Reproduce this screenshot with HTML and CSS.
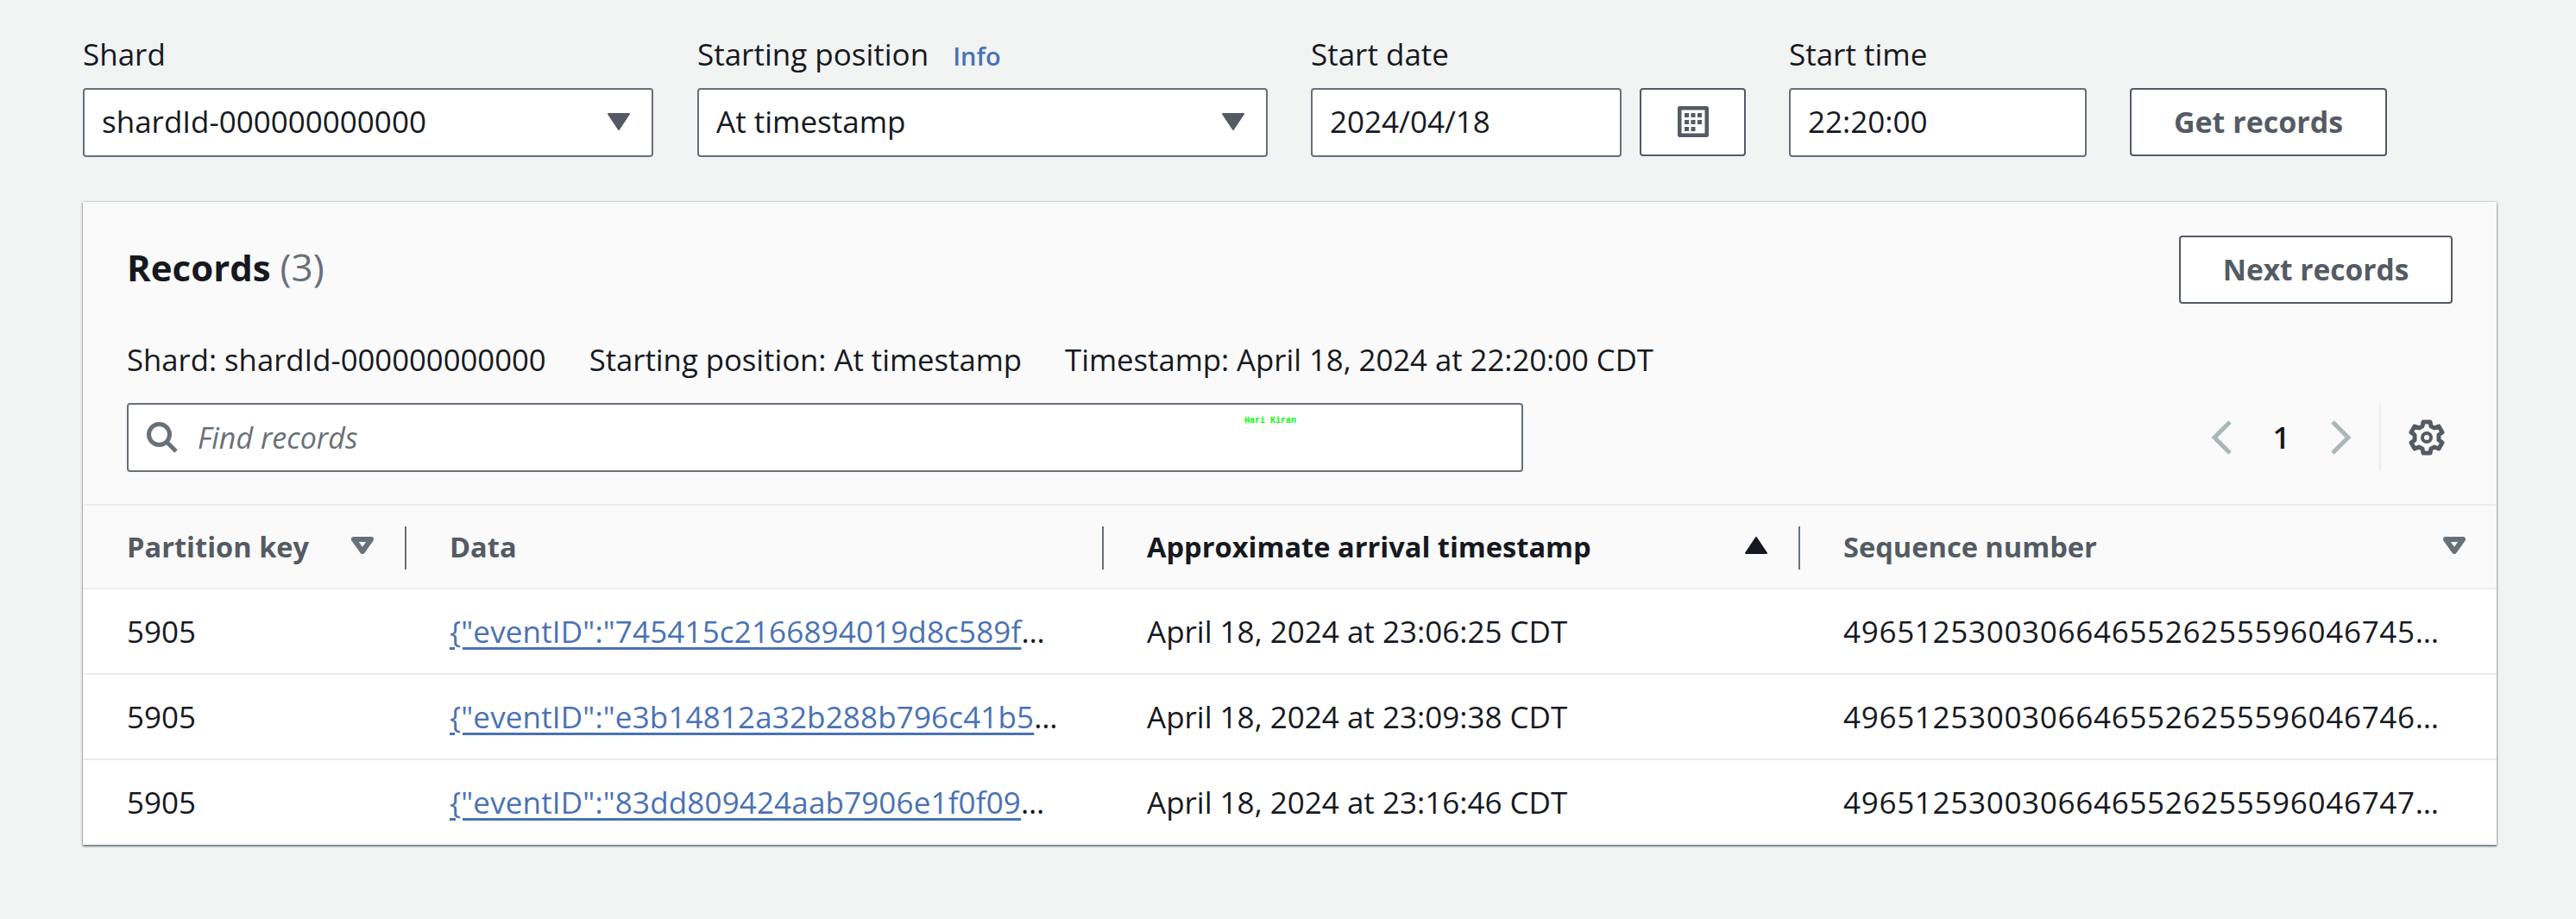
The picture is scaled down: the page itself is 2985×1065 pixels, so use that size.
FILE: index.html
```html
<!DOCTYPE html>
<html lang="en">
<head>
    <meta charset="UTF-8">
    <title>Records</title>
    <link rel="stylesheet" href="styles.css">
</head>
<body>

    <!-- Query form -->
    <div class="query">
        <div class="field field-select">
            <div class="field-label">Shard</div>
            <div class="control select">
                <span>shardId-000000000000</span>
                <svg class="caret" viewBox="0 0 26 20"><path d="M1 1h24L13 19z" fill="#545b64" stroke="#545b64" stroke-width="2" stroke-linejoin="round"/></svg>
            </div>
        </div>
        <div class="field field-select field-narrow">
            <div class="field-label">Starting position <a class="info">Info</a></div>
            <div class="control select">
                <span>At timestamp</span>
                <svg class="caret" viewBox="0 0 26 20"><path d="M1 1h24L13 19z" fill="#545b64" stroke="#545b64" stroke-width="2" stroke-linejoin="round"/></svg>
            </div>
        </div>
        <div class="field field-narrow">
            <div class="field-label">Start date</div>
            <div class="date-row">
                <div class="control date-input">2024/04/18</div>
                <button class="btn btn-cal">
                    <svg width="36" height="36" viewBox="0 0 36 36">
                        <rect x="2" y="2" width="32" height="32" rx="2" fill="none" stroke="#545b64" stroke-width="5"/>
                        <path fill="#545b64" d="M8 8h5v5H8zM15.500 8h5v5h-5zM23 8h5v5h-5zM8 16h5v5H8zM15.500 16h5v5h-5zM23 16h5v5h-5zM8 24h5v5H8zM15.500 24h5v5h-5z"/>
                    </svg>
                </button>
            </div>
        </div>
        <div class="field field-narrow">
            <div class="field-label">Start time</div>
            <div class="control time-input">22:20:00</div>
        </div>
        <button class="btn btn-get">Get records</button>
    </div>

    <!-- Records panel -->
    <div class="panel">
        <div class="panel-head">
            <div class="panel-top">
                <h2>Records <span class="count">(3)</span></h2>
                <button class="btn btn-next">Next records</button>
            </div>
            <div class="meta">
                <span>Shard: shardId-000000000000</span>
                <span>Starting position: At timestamp</span>
                <span>Timestamp: April 18, 2024 at 22:20:00 CDT</span>
            </div>
            <div class="tools">
                <div class="search">
                    <svg class="search-icon" width="38" height="38" viewBox="0 0 38 38"><circle cx="15.500" cy="15.500" r="12" fill="none" stroke="#687078" stroke-width="5"/><path d="M24 24l11 11" stroke="#687078" stroke-width="5"/></svg>
                    <span class="placeholder">Find records</span>
                    <span class="watermark">Hari Kiran</span>
                </div>
                <div class="pager">
                    <svg class="chev" width="26" height="40" viewBox="0 0 26 40"><path d="M22 2L4 20l18 18" fill="none" stroke="#aab7b8" stroke-width="5"/></svg>
                    <span class="page">1</span>
                    <svg class="chev" width="26" height="40" viewBox="0 0 26 40"><path d="M4 2l18 18L4 38" fill="none" stroke="#aab7b8" stroke-width="5"/></svg>
                </div>
                <div class="settings">
                    <svg width="42" height="42" viewBox="0 0 42 42">
                        <path d="M17 3h8l1 5 4 2 5-2 4 7-4 3v6l4 3-4 7-5-2-4 2-1 5h-8l-1-5-4-2-5 2-4-7 4-3v-6l-4-3 4-7 5 2 4-2z" fill="none" stroke="#545b64" stroke-width="5" stroke-linejoin="round"/>
                        <circle cx="21" cy="21" r="5" fill="none" stroke="#545b64" stroke-width="4"/>
                    </svg>
                </div>
            </div>
        </div>

        <div class="grid-row grid-head">
            <div class="th">Partition key
                <svg class="sort" viewBox="0 0 26 20"><path d="M3 3h20L13 17z" fill="none" stroke="#687078" stroke-width="6" stroke-linejoin="round"/></svg>
            </div>
            <div class="th">Data</div>
            <div class="th th-active">Approximate arrival timestamp
                <svg class="sort" viewBox="0 0 26 20"><path d="M1 19h24L13 1z" fill="#16191f" stroke="#16191f" stroke-width="2" stroke-linejoin="round"/></svg>
            </div>
            <div class="th">Sequence number
                <svg class="sort" viewBox="0 0 26 20"><path d="M3 3h20L13 17z" fill="none" stroke="#687078" stroke-width="6" stroke-linejoin="round"/></svg>
            </div>
        </div>

        <div class="grid-row">
            <div class="td">5905</div>
            <div class="td"><div class="clip"><a>{"eventID":"745415c2166894019d8c589f2c1a</a></div></div>
            <div class="td">April 18, 2024 at 23:06:25 CDT</div>
            <div class="td"><div class="clip seq">4965125300306646552625559604674531</div></div>
        </div>
        <div class="grid-row">
            <div class="td">5905</div>
            <div class="td"><div class="clip"><a>{"eventID":"e3b14812a32b288b796c41b5fd70</a></div></div>
            <div class="td">April 18, 2024 at 23:09:38 CDT</div>
            <div class="td"><div class="clip seq">4965125300306646552625559604674652</div></div>
        </div>
        <div class="grid-row">
            <div class="td">5905</div>
            <div class="td"><div class="clip"><a>{"eventID":"83dd809424aab7906e1f0f0982b6</a></div></div>
            <div class="td">April 18, 2024 at 23:16:46 CDT</div>
            <div class="td"><div class="clip seq">4965125300306646552625559604674773</div></div>
        </div>
    </div>

</body>
</html>
```

FILE: styles.css
```css
body {
    margin: 0;
    height: 1065px;
    padding: 0 92px 0 96px;
    box-sizing: border-box;
    overflow: hidden;
    background-color: #f2f3f3;
    color: #16191f;
    font-family: "Open Sans", "Noto Sans", sans-serif;
    font-size: 35px;
    line-height: 44px;
}

/* query form */
.query {
    display: flex;
    align-items: flex-end;
    padding-top: 41px;
    padding-bottom: 52px;
}
.field {
    margin-right: 51px;
}
.field-narrow {
    margin-right: 50px;
}
.field-select .control {
    width: 661px;
}
.field-label {
    height: 61px;
    white-space: nowrap;
}
.info {
    margin-left: 19px;
    color: #4a72b5;
    font-size: 29px;
    font-weight: 600;
}
.control {
    box-sizing: border-box;
    height: 80px;
    padding: 0 20px 2px;
    display: flex;
    align-items: center;
    justify-content: space-between;
    background-color: #fff;
    border: 2px solid #687078;
    border-radius: 4px;
}
.caret {
    width: 26px;
    height: 20px;
    margin-right: 5px;
}
.date-row {
    display: flex;
    gap: 21px;
}
.date-input {
    width: 360px;
}
.time-input {
    width: 345px;
}
.btn {
    box-sizing: border-box;
    height: 79px;
    padding: 0 0 2px;
    background-color: #fff;
    border: 2px solid #545b64;
    border-radius: 4px;
    color: #545b64;
    font-family: inherit;
    font-size: 34px;
    font-weight: 700;
}
.btn-cal {
    width: 123px;
    display: flex;
    align-items: center;
    justify-content: center;
}
.btn-get {
    width: 298px;
    margin-bottom: 1px;
}
.btn-next {
    width: 317px;
    font-size: 33.500px;
}

/* records panel */
.panel {
    background-color: #fff;
    box-shadow: 0 2px 2px rgba(0, 28, 36, 0.5), 1px 0 2px rgba(0, 28, 36, 0.2), -1px 0 2px rgba(0, 28, 36, 0.2);
}
.panel-head {
    box-sizing: border-box;
    height: 352px;
    padding: 39px 51px 0;
    background-color: #fafafa;
    border-bottom: 2px solid #eaeded;
}
.panel-top {
    display: flex;
    align-items: center;
    justify-content: space-between;
    height: 79px;
}
h2 {
    margin: -6px 0 0;
    font-size: 42px;
    font-weight: 700;
}
.count {
    color: #687078;
    font-size: 44px;
    font-weight: 400;
}
.meta {
    display: flex;
    gap: 50px;
    margin-top: 43px;
    height: 46px;
    font-size: 34.700px;
    white-space: nowrap;
}
.tools {
    display: flex;
    align-items: center;
    margin-top: 26px;
}
.search {
    position: relative;
    box-sizing: border-box;
    width: 1618px;
    height: 80px;
    padding-left: 20px;
    display: flex;
    align-items: center;
    background-color: #fff;
    border: 2px solid #687078;
    border-radius: 4px;
}
.placeholder {
    margin-left: 22px;
    color: #687078;
    font-style: italic;
    font-size: 34px;
}
.watermark {
    position: absolute;
    left: 1293px;
    top: 11px;
    color: #00ff00;
    font-family: "Liberation Mono", monospace;
    font-size: 10px;
    font-weight: 700;
    line-height: 16px;
}
.pager {
    display: flex;
    align-items: center;
    margin-left: auto;
}
.page {
    width: 111px;
    text-align: center;
    font-weight: 600;
}
.settings {
    box-sizing: border-box;
    height: 78px;
    margin: 0 9px 0 32px;
    padding-left: 32px;
    display: flex;
    align-items: center;
    border-left: 2px solid #eaeded;
}

/* table */
.grid-row {
    display: grid;
    grid-template-columns: 373px 808px 807px 809px;
    height: 99px;
    border-bottom: 2px solid #eaeded;
    box-sizing: border-box;
}
.grid-row:last-child {
    border-bottom: 0;
    height: 98px;
}
.grid-head {
    height: 97px;
    background-color: #fafafa;
}
.th {
    position: relative;
    display: flex;
    align-items: center;
    justify-content: space-between;
    padding: 0 36px 0 51px;
    color: #545b64;
    font-size: 32.600px;
    font-weight: 700;
}
.th + .th {
    padding-left: 52px;
}
.th + .th::before {
    content: "";
    position: absolute;
    left: 0;
    top: 24px;
    height: 50px;
    border-left: 2px solid #687078;
}
.th-active {
    color: #16191f;
}
.sort {
    width: 26px;
    height: 20px;
    margin-top: -4px;
}
.td {
    display: flex;
    align-items: center;
    min-width: 0;
    padding: 0 49px 0 51px;
}
.td + .td {
    padding-left: 52px;
}
.td:last-child {
    padding-right: 64px;
}
.clip {
    overflow: hidden;
    white-space: nowrap;
    text-overflow: ellipsis;
    letter-spacing: 0.150px;
}
.seq {
    letter-spacing: 0.700px;
}
a {
    color: #4a72b5;
}
.clip a {
    text-decoration: underline;
    text-decoration-thickness: 3px;
    text-underline-offset: 5px;
}
```
